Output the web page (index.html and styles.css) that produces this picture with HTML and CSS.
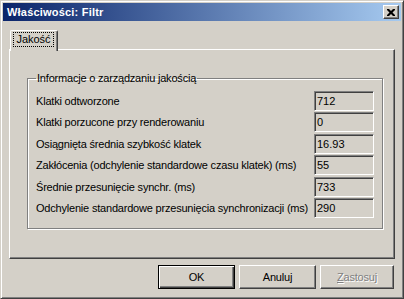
FILE: index.html
```html
<!DOCTYPE html>
<html lang="pl">
<head>
<meta charset="utf-8">
<title>Właściwości: Filtr</title>
<link rel="stylesheet" href="styles.css">
</head>
<body>
<div class="window">
  <div class="titlebar">
    <span class="title">Właściwości: Filtr</span>
    <span class="close"><svg width="8" height="7" viewBox="0 0 8 7"><path d="M0 0h2l2 2 2-2h2v1l-2.5 2.5L8 6v1H6L4 5 2 7H0V6l2.5-2.5L0 1z" fill="#000"/></svg></span>
  </div>
  <div class="content">
    <div class="tabs">
      <div class="tab"><span class="focus">Jakość</span></div>
    </div>
    <div class="panel">
      <fieldset class="group">
        <legend>Informacje o zarządzaniu jakością</legend>
        <div class="rows">
          <div class="row"><span class="label">Klatki odtworzone</span><span class="field">712</span></div>
          <div class="row"><span class="label">Klatki porzucone przy renderowaniu</span><span class="field">0</span></div>
          <div class="row"><span class="label">Osiągnięta średnia szybkość klatek</span><span class="field">16.93</span></div>
          <div class="row"><span class="label">Zakłócenia (odchylenie standardowe czasu klatek) (ms)</span><span class="field">55</span></div>
          <div class="row"><span class="label">Średnie przesunięcie synchr. (ms)</span><span class="field">733</span></div>
          <div class="row"><span class="label">Odchylenie standardowe przesunięcia synchronizacji (ms)</span><span class="field">290</span></div>
        </div>
      </fieldset>
    </div>
    <div class="buttons">
      <div class="btn default"><span>OK</span></div>
      <div class="btn"><span>Anuluj</span></div>
      <div class="btn disabled"><span><u>Z</u>astosuj</span></div>
    </div>
  </div>
</div>
</body>
</html>
```
FILE: styles.css
```css
html, body {
  margin: 0;
  padding: 0;
  background: #D4D0C8;
}
body {
  font-family: "Liberation Sans", Arial, sans-serif;
  font-size: 11px;
  letter-spacing: -0.2px;
  color: #000;
}
.window {
  width: 404px;
  height: 299px;
  box-sizing: border-box;
  background: #D4D0C8;
  border: 1px solid;
  border-color: #D4D0C8 #404040 #404040 #D4D0C8;
  box-shadow: inset 1px 1px 0 #fff, inset -1px -1px 0 #808080;
  padding: 2px;
  display: flex;
  flex-direction: column;
}
.titlebar {
  height: 18px;
  background: linear-gradient(to right, #0A246A, #A6CAF0);
  display: flex;
  align-items: center;
  justify-content: space-between;
  padding: 0 2px 0 4px;
}
.title {
  color: #fff;
  font-weight: bold;
  font-size: 11px;
  letter-spacing: 0.2px;
}
.close {
  width: 16px;
  height: 14px;
  box-sizing: border-box;
  background: #D4D0C8;
  border: 1px solid;
  border-color: #fff #404040 #404040 #fff;
  box-shadow: inset -1px -1px 0 #808080;
  display: flex;
  align-items: center;
  justify-content: center;
}
.close svg { display: block; margin-left: -1px; }
.content {
  flex: 1;
  display: flex;
  flex-direction: column;
  padding: 9px 6px 0 6px;
}
.tabs {
  display: flex;
  padding-left: 1px;
  height: 19px;
}
.tab {
  position: relative;
  z-index: 1;
  width: 48px;
  height: 21px;
  box-sizing: border-box;
  background: #D4D0C8;
  border-left: 1px solid #fff;
  border-top: 1px solid #fff;
  border-right: 1px solid #404040;
  border-radius: 2px 2px 0 0;
  box-shadow: inset -1px 0 0 #808080;
  display: flex;
  justify-content: center;
  padding-top: 1px;
}
.focus {
  height: 15px;
  line-height: 13px;
  box-sizing: border-box;
  border: 1px dotted #000;
  padding: 0 2px;
  margin-left: -1px;
  letter-spacing: 0;
}
.panel {
  height: 210px;
  box-sizing: border-box;
  border: 1px solid;
  border-color: #fff #404040 #404040 #fff;
  box-shadow: inset -1px -1px 0 #808080;
  padding: 22px 11px 0 17px;
}
.group {
  margin: 0;
  padding: 6px 8px 0 8px;
  height: 157px;
  box-sizing: border-box;
  border: 1px solid #808080;
  box-shadow: inset 1px 1px 0 #fff, 1px 1px 0 #fff;
}
.group legend {
  padding: 0 1px;
  margin-left: 0;
  line-height: 13px;
}
.rows {
  display: flex;
  flex-direction: column;
  gap: 1.4px;
}
.row {
  display: flex;
  align-items: center;
  justify-content: space-between;
  height: 20px;
}
.label {
  white-space: nowrap;
}
.field {
  flex: none;
  width: 60px;
  height: 20px;
  box-sizing: border-box;
  border: 1px solid;
  border-color: #808080 #fff #fff #808080;
  box-shadow: inset 1px 1px 0 #404040, inset -1px -1px 0 #D4D0C8;
  padding: 0 0 0 2px;
  line-height: 18px;
  letter-spacing: 0;
}
.buttons {
  display: flex;
  justify-content: flex-end;
  gap: 4px;
  margin-top: 6px;
  padding-right: 1px;
}
.btn {
  width: 77px;
  height: 24px;
  box-sizing: border-box;
  border: 1px solid;
  border-color: #fff #404040 #404040 #fff;
  box-shadow: inset -1px -1px 0 #808080;
  display: flex;
  align-items: center;
  justify-content: center;
}
.btn.default {
  border: 1px solid #000;
  box-shadow: inset 1px 1px 0 #fff, inset -1px -1px 0 #404040, inset -2px -2px 0 #808080;
}
.btn.disabled {
  width: 74px;
  color: #808080;
  text-shadow: 1px 1px 0 #fff;
}
.btn.disabled u {
  text-decoration-color: #808080;
}
```
